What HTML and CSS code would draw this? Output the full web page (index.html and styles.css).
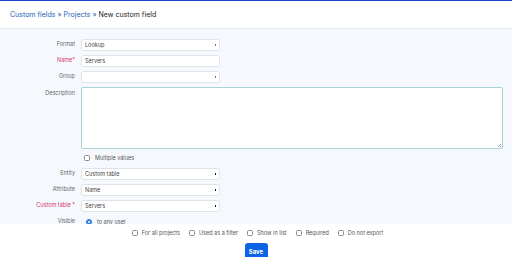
FILE: index.html
```html
<!DOCTYPE html>
<html>
<head>
<meta charset="utf-8">
<link rel="stylesheet" href="styles.css">
</head>
<body>
<div class="page">
  <header class="header">
    <a class="crumb">Custom fields</a><span class="sep">»</span><a class="crumb">Projects</a><span class="sep">»</span><span class="current">New custom field</span>
  </header>
  <main class="form">
    <div class="row">
      <label class="label">Format</label>
      <div class="control select">Lookup<span class="arrow"></span></div>
    </div>
    <div class="row">
      <label class="label req">Name*</label>
      <div class="control">Servers</div>
    </div>
    <div class="row">
      <label class="label">Group</label>
      <div class="control select"><span class="arrow"></span></div>
    </div>
    <div class="row row-top">
      <label class="label">Description</label>
      <div class="textarea"><span class="grip"></span></div>
    </div>
    <div class="row row-check">
      <span class="label"></span>
      <div class="check-line"><span class="box"></span>Multiple values</div>
    </div>
    <div class="row">
      <label class="label">Entity</label>
      <div class="control select">Custom table<span class="arrow dark"></span></div>
    </div>
    <div class="row">
      <label class="label">Attribute</label>
      <div class="control select">Name<span class="arrow dark"></span></div>
    </div>
    <div class="row">
      <label class="label req">Custom table *</label>
      <div class="control select">Servers<span class="arrow dark"></span></div>
    </div>
    <div class="row row-visible">
      <label class="label">Visible</label>
      <div class="radio-line"><span class="radio"></span>to any user</div>
    </div>
  </main>
  <footer class="footer">
    <div class="flags">
      <span class="flag"><span class="box"></span>For all projects</span>
      <span class="flag"><span class="box"></span>Used as a filter</span>
      <span class="flag"><span class="box"></span>Show in list</span>
      <span class="flag"><span class="box"></span>Required</span>
      <span class="flag"><span class="box"></span>Do not export</span>
    </div>
    <button class="save">Save</button>
  </footer>
</div>
</body>
</html>
```
FILE: styles.css
```css
html, body {
  margin: 0;
  padding: 0;
  background: #ffffff;
}
body {
  font-family: Inter, "Noto Sans", sans-serif;
  color: #333;
  width: 512px;
  height: 257px;
  overflow: hidden;
}
.page {
  width: 512px;
  height: 257px;
  display: flex;
  flex-direction: column;
  border-top: 1px solid #1747c9;
  box-sizing: border-box;
  box-shadow: inset -4px 0 4px -3px rgba(0,0,0,0.08);
}
.header {
  height: 27px;
  flex: none;
  display: flex;
  align-items: center;
  padding-left: 10px;
  font-size: 7px;
  border-bottom: 1px solid #e6eaef;
  background: #fff;
}
.crumb {
  color: #2463b8;
}
.sep {
  color: #2463b8;
  margin: 0 2px;
}
.current {
  color: #222;
}
.form {
  height: 195px;
  flex: none;
  overflow: hidden;
  background: #f5f9fd;
  padding: 9.5px 9px 0 0;
  box-sizing: border-box;
  display: flex;
  flex-direction: column;
  gap: 4px;
}
.row {
  display: grid;
  grid-template-columns: 75px 1fr;
  column-gap: 6px;
  align-items: center;
  height: 12px;
  flex: none;
}
.row-top {
  align-items: start;
  height: 62px;
}
.row-top .label {
  padding-top: 3px;
}
.row-check {
  height: 11px;
}
.row-visible {
  height: 12px;
}
.label {
  text-align: right;
  font-size: 5.5px;
  color: #666;
  line-height: 7px;
}
.label.req {
  color: #d6336c;
}
.control {
  width: 139px;
  height: 12px;
  box-sizing: border-box;
  background: #fff;
  border: 1px solid #dde3ea;
  border-radius: 2.5px;
  font-size: 5.5px;
  color: #444;
  padding-left: 3px;
  display: flex;
  align-items: center;
  position: relative;
}
.arrow {
  position: absolute;
  right: 3px;
  top: 4.5px;
  width: 1.5px;
  height: 1.5px;
  background: #777;
}
.arrow.dark {
  background: #111;
}
.textarea {
  height: 62px;
  box-sizing: border-box;
  background: #fff;
  border: 1px solid #a9d2d6;
  border-radius: 2px;
  position: relative;
}
.grip {
  position: absolute;
  right: 1px;
  bottom: 1px;
  width: 3px;
  height: 3px;
  background: linear-gradient(135deg, transparent 45%, #999 45%, #999 60%, transparent 60%, transparent 75%, #999 75%);
}
.check-line, .radio-line {
  display: flex;
  align-items: center;
  font-size: 5.5px;
  color: #555;
  padding-left: 3px;
}
.box {
  width: 6px;
  height: 6px;
  box-sizing: border-box;
  border: 0.8px solid #8a8a8a;
  border-radius: 1.5px;
  background: #fff;
  margin-right: 5px;
  flex: none;
}
.radio {
  width: 6px;
  height: 6px;
  box-sizing: border-box;
  border-radius: 50%;
  background: #fff;
  border: 1.5px solid #1a66e0;
  box-shadow: inset 0 0 0 1px #1a66e0;
  margin-left: 2px;
  margin-right: 5px;
  flex: none;
}
.footer {
  flex: 1;
  background: #fff;
  display: flex;
  flex-direction: column;
  align-items: center;
  padding-top: 5px;
  box-sizing: border-box;
}
.flags {
  display: flex;
  gap: 9px;
  font-size: 5.5px;
  color: #555;
  height: 7px;
  align-items: center;
  padding-left: 3px;
}
.flag {
  display: flex;
  align-items: center;
}
.flag .box {
  margin-right: 4px;
}
.save {
  margin-top: 7px;
  width: 23px;
  height: 16px;
  border: none;
  border-radius: 3px;
  background: #0b63e5;
  color: #fff;
  font-family: Inter, sans-serif;
  font-weight: 700;
  font-size: 6px;
  padding: 0;
}
```
